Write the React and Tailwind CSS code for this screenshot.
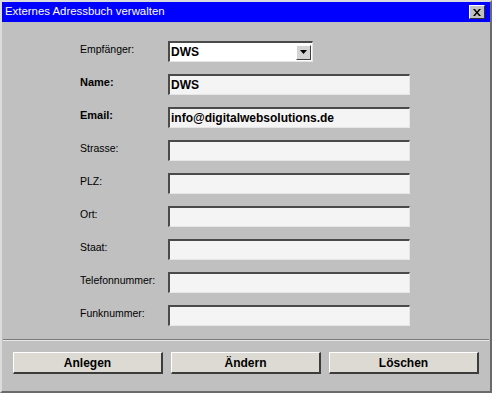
import { useState } from "react";

const fields = [
  { label: "Name:", bold: true, value: "DWS" },
  { label: "Email:", bold: true, value: "info@digitalwebsolutions.de" },
  { label: "Strasse:" },
  { label: "PLZ:" },
  { label: "Ort:" },
  { label: "Staat:" },
  { label: "Telefonnummer:" },
  { label: "Funknummer:" },
];

function Label({ children, bold }) {
  return (
    <div
      className={
        "w-[88px] shrink-0 pt-[1px] text-black leading-[14px] " +
        (bold ? "font-bold text-[11px]" : "text-[10.5px]")
      }
    >
      {children}
    </div>
  );
}

function Field({ value }) {
  return (
    <div className="w-[242px] h-[21px] bg-[#f4f4f4] border-t-2 border-l-2 border-t-[#4a4a4a] border-l-[#4a4a4a] border-b border-r border-b-[#e6e6e6] border-r-[#e6e6e6] flex items-center pl-[1px] text-[12px] font-bold text-black">
      {value}
    </div>
  );
}

function Button({ children }) {
  return (
    <button className="flex-1 h-[22px] bg-[#dcdad3] border-t border-l border-t-white border-l-white border-b-2 border-r-2 border-b-[#3c3c3c] border-r-[#3c3c3c] text-[12px] font-bold text-black leading-none">
      {children}
    </button>
  );
}

export default function App() {
  const [recipient] = useState("DWS");

  return (
    <div
      className="w-[492px] h-[393px] bg-[#c0c0c0] border-2 border-t-[#dcdcdc] border-l-[#dcdcdc] border-r-[#6a6a6a] border-b-[#6a6a6a] flex flex-col"
      style={{ fontFamily: '"Liberation Sans", Arial, sans-serif' }}
    >
      <div className="h-[20px] bg-[#0000ff] flex items-center justify-between pl-[3px] pr-[5px]">
        <span className="text-white text-[11.4px] leading-none">Externes Adressbuch verwalten</span>
        <div className="w-[16px] h-[14px] bg-[#c0c0c0] border-t border-l border-t-white border-l-white border-b border-r border-b-[#303030] border-r-[#303030] flex items-center justify-center">
          <svg width="8" height="7" viewBox="0 0 8 7">
            <path d="M0 0h2l2 2.5L6 0h2L5 3.5 8 7H6L4 4.5 2 7H0l3-3.5z" fill="#000" />
          </svg>
        </div>
      </div>

      <div className="flex flex-col gap-[12px] pl-[78px] pt-[19px]">
        <div className="flex h-[21px]">
          <Label>Empfänger:</Label>
          <div className="w-[145px] h-[21px] bg-white border-t-2 border-l-2 border-t-[#4a4a4a] border-l-[#4a4a4a] border-b border-r border-b-[#e6e6e6] border-r-[#e6e6e6] flex items-center">
            <span className="flex-1 pl-[1px] text-[12px] font-bold text-black">{recipient}</span>
            <div className="w-[15px] h-[15px] mr-[1px] bg-[#d4d4d4] border-t border-l border-t-white border-l-white border-b border-r border-b-[#404040] border-r-[#404040] flex items-center justify-center">
              <svg width="7" height="4" viewBox="0 0 7 4">
                <path d="M0 0h7L3.5 4z" fill="#000" />
              </svg>
            </div>
          </div>
        </div>
        {fields.map((f) => (
          <div key={f.label} className="flex h-[21px]">
            <Label bold={f.bold}>{f.label}</Label>
            <Field value={f.value} />
          </div>
        ))}
      </div>

      <div className="mt-[13px] mx-[1px] border-t border-t-[#7a7a7a] border-b border-b-[#e8e8e8]" />

      <div className="flex gap-[8px] px-[11px] pt-[11px]">
        <Button>Anlegen</Button>
        <Button>Ändern</Button>
        <Button>Löschen</Button>
      </div>
    </div>
  );
}
